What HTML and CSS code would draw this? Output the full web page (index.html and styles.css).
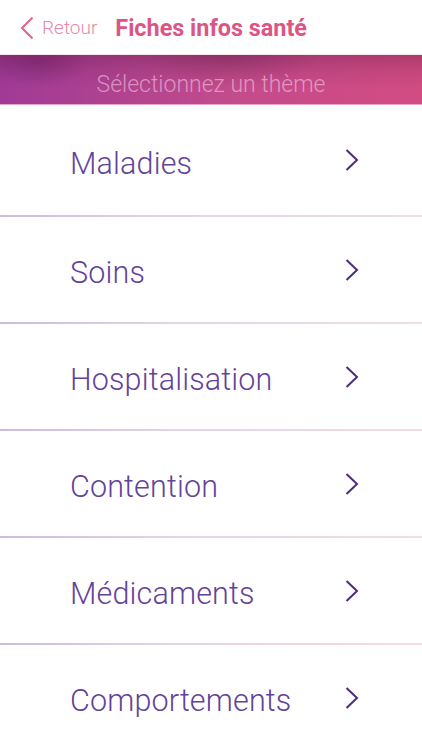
FILE: index.html
```html
<!DOCTYPE html>
<html lang="fr">
<head>
<meta charset="utf-8">
<link rel="stylesheet" href="styles.css">
</head>
<body>
<div class="app">
  <header class="nav">
    <div class="back">
      <svg class="back-icon" width="14" height="24" viewBox="0 0 14 24"><path d="M12.5 1.5 L2 12 L12.5 22.5" fill="none" stroke="#e0628e" stroke-width="2"/></svg>
      <span class="back-label">Retour</span>
    </div>
    <h1 class="title">Fiches infos santé</h1>
  </header>
  <div class="banner">
    <span class="banner-text">Sélectionnez un thème</span>
  </div>
  <ul class="list">
    <li class="row first"><span class="label">Maladies</span><svg class="chev" width="14" height="22" viewBox="0 0 14 22"><path d="M1.5 1 L12 11 L1.5 21" fill="none" stroke="#4b2c80" stroke-width="2"/></svg></li>
    <li class="row"><span class="label">Soins</span><svg class="chev" width="14" height="22" viewBox="0 0 14 22"><path d="M1.5 1 L12 11 L1.5 21" fill="none" stroke="#4b2c80" stroke-width="2"/></svg></li>
    <li class="row"><span class="label">Hospitalisation</span><svg class="chev" width="14" height="22" viewBox="0 0 14 22"><path d="M1.5 1 L12 11 L1.5 21" fill="none" stroke="#4b2c80" stroke-width="2"/></svg></li>
    <li class="row"><span class="label">Contention</span><svg class="chev" width="14" height="22" viewBox="0 0 14 22"><path d="M1.5 1 L12 11 L1.5 21" fill="none" stroke="#4b2c80" stroke-width="2"/></svg></li>
    <li class="row"><span class="label">Médicaments</span><svg class="chev" width="14" height="22" viewBox="0 0 14 22"><path d="M1.5 1 L12 11 L1.5 21" fill="none" stroke="#4b2c80" stroke-width="2"/></svg></li>
    <li class="row"><span class="label">Comportements</span><svg class="chev" width="14" height="22" viewBox="0 0 14 22"><path d="M1.5 1 L12 11 L1.5 21" fill="none" stroke="#4b2c80" stroke-width="2"/></svg></li>
  </ul>
</div>
</body>
</html>
```
FILE: styles.css
```css
* { box-sizing: border-box; }
html, body { margin: 0; padding: 0; background: #fff; }
body { font-family: Roboto, "Liberation Sans", sans-serif; width: 422px; height: 750px; overflow: hidden; }
.app { display: flex; flex-direction: column; }
.nav {
  height: 55px;
  display: flex;
  align-items: center;
  padding-left: 20px;
  padding-top: 1px;
  background: #fff;
  border-bottom: 1px solid #f6e6ec;
}
.back { display: flex; align-items: center; gap: 8px; }
.back-icon { display: block; }
.back-label { font-weight: 300; font-size: 19px; color: #e68aa9; }
.title {
  margin: 0 0 0 18px;
  font-size: 23.4px;
  font-weight: 700;
  color: #dc5584;
}
.banner {
  height: 50px;
  display: flex;
  align-items: center;
  justify-content: center;
  background:
    linear-gradient(180deg, rgba(90,20,60,0.30) 0%, rgba(90,20,60,0.10) 35%, rgba(0,0,0,0) 70%),
    radial-gradient(ellipse 50px 25px at 40px 6px, rgba(80,20,80,0.30), rgba(80,20,80,0)),
    radial-gradient(ellipse 90px 30px at 230px 0px, rgba(80,20,60,0.25), rgba(80,20,60,0)),
    linear-gradient(90deg, #a03a97 0%, #b2438f 30%, #c34c8c 55%, #cc4b87 80%, #d24c82 100%);
  border-bottom: 1px solid #e9a6c6;
}
.banner-text {
  font-weight: 300;
  font-size: 23px;
  color: rgba(255, 215, 240, 0.55);
  margin-top: 10px;
}
.list { list-style: none; margin: 0; padding: 0; }
.row {
  height: 107px;
  display: flex;
  align-items: center;
  padding-left: 70px;
  padding-right: 63px;
  justify-content: space-between;
  border-top: 2px solid transparent;
  border-image: linear-gradient(90deg, #cbbbdf 0%, #e3d3e6 40%, #f3dde4 100%) 1;
}
.row.first { height: 110px; border-top: none; border-image: none; }
.label {
  font-weight: 300;
  font-size: 30.5px;
  letter-spacing: 0.15px;
  color: #634399;
  padding-top: 6px;
}
.chev { display: block; }
```
